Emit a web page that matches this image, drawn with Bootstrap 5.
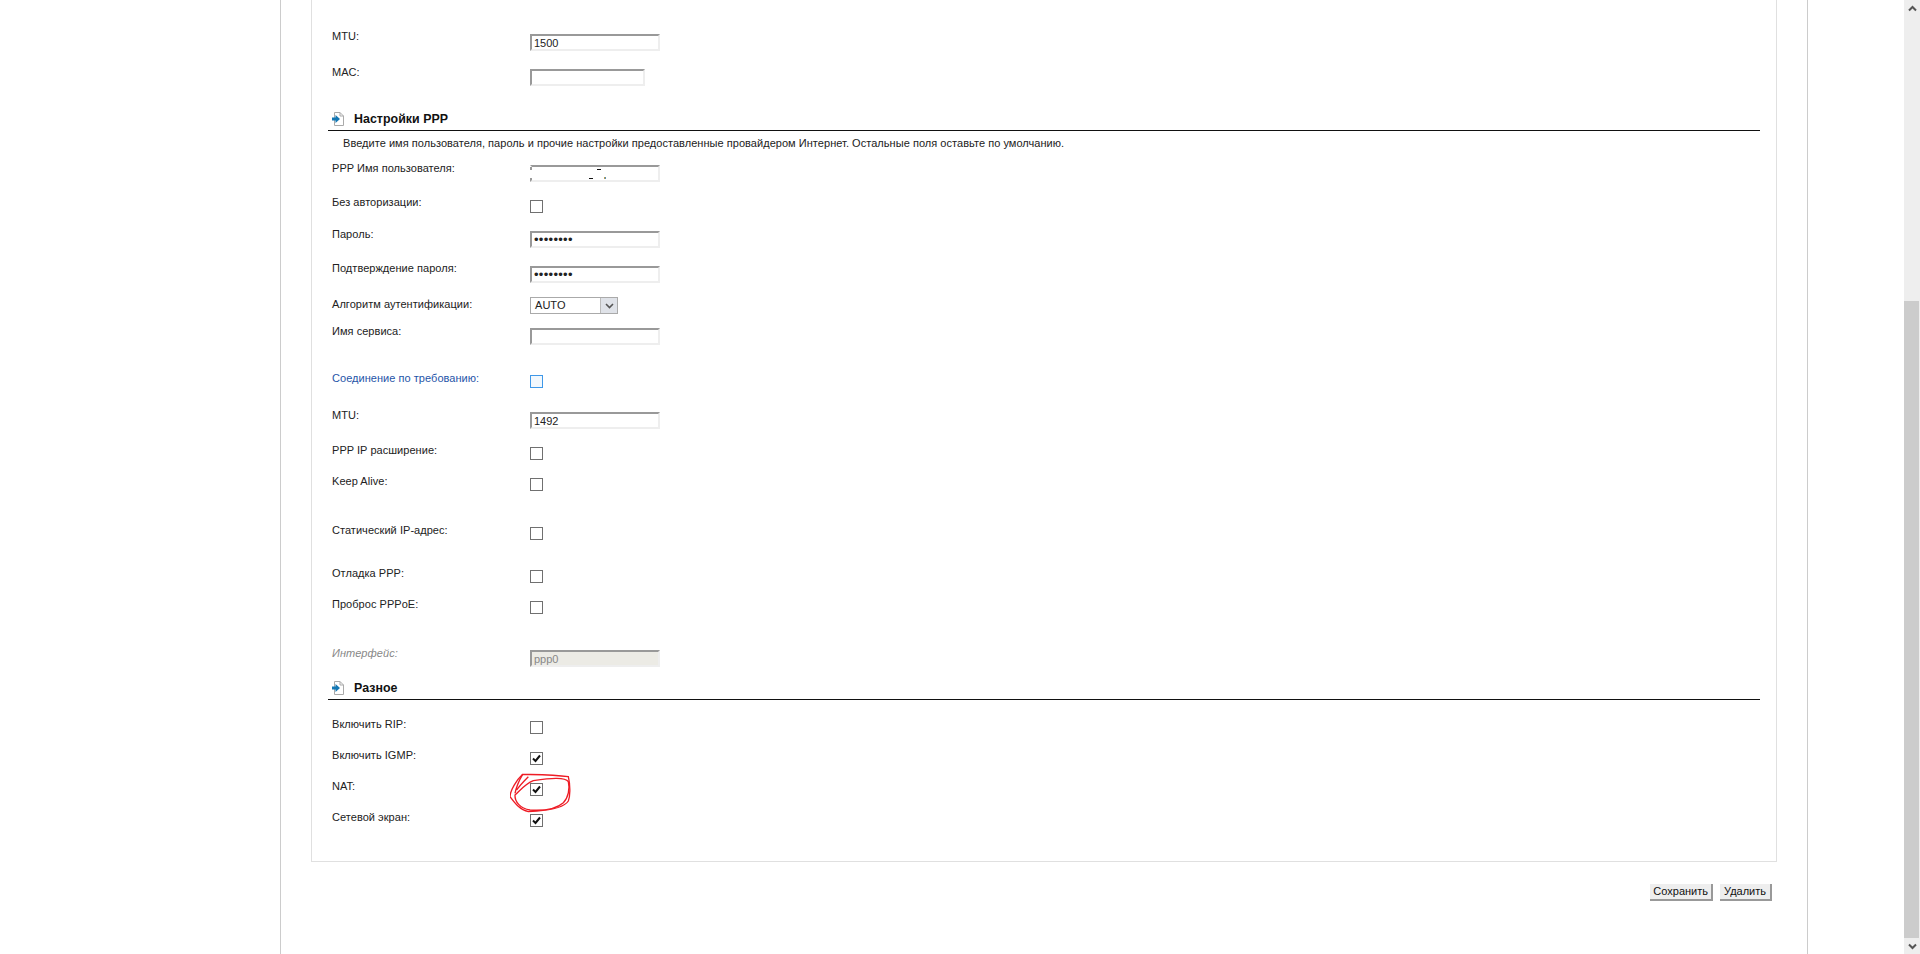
<!DOCTYPE html>
<html lang="ru">
<head>
<meta charset="utf-8">
<title>Настройки PPP</title>
<link rel="stylesheet" href="https://cdn.jsdelivr.net/npm/bootstrap@5.3.0/dist/css/bootstrap.min.css">
<style>
html,body{height:954px;overflow:hidden;background:#fff}
body{font-family:"Liberation Sans",Arial,sans-serif;font-size:11px;line-height:13px;color:#222;letter-spacing:.04px}
.shell{height:954px}
.gutter-l{width:280px}
.sheet{width:1528px;border-left:1px solid #ccc;border-right:1px solid #ccc;padding-left:30px}
.gutter-r{width:96px}
.sbar{width:16px;background:#eee}
.sbtn{height:16px}
.sthumb{width:15px;height:637px;background:#ccc;margin-top:285px}
.sheet-panel{height:862px;width:1466px;border:solid #e0e0e0;border-width:0 1px 1px 1px;padding:34px 0 0 16px;position:relative}
.frow{display:flex;align-items:flex-start;padding-left:4px}
.flabel{width:198px;flex:none;margin-top:-3px}
.up2{margin-top:-4px}.dn1{margin-top:1px}
.fld{display:block;width:130px;height:17px;border:2px solid;border-color:#999 #eee #eee #999;background:#fff;padding:0 2px;font:11px/13px "Liberation Sans",Arial,sans-serif;color:#222;border-radius:0;outline:0}
.fld-s{width:115px}
.fld-pass{font-size:13px;letter-spacing:.3px}
.fld-off{background:#ecebe5;color:#888;border-right-color:#eee}
.fld-wiped{border-left-color:transparent;background:
  linear-gradient(#999,#999) 0 0/2px 5px no-repeat border-box,
  linear-gradient(#999,#999) 0 13px/2px 4px no-repeat border-box,
  linear-gradient(#111,#111) 67px 4px/4px 1px no-repeat border-box,
  linear-gradient(#111,#111) 59px 13px/4px 1px no-repeat border-box,
  linear-gradient(90deg,#e8a020,#2a8ae0) 74px 12px/2px 2px no-repeat border-box,
  #fff}
.pick{width:88px;height:17px;border:1px solid #aaa;background:#fff;padding-left:4px;line-height:15px;color:#222}
.pick-arrow{margin-left:auto;width:17px;background:#dfe2e8;border-left:1px solid #bbb}
.tick{display:flex;align-items:center;justify-content:center;width:13px;height:13px;border:1px solid #707070;background:#fff}
.tick-focus{border-color:#3f98e8;background:#f2f8fd}
.sect{height:23px;border-bottom:1px solid #111;font-size:12.4px;font-weight:700;color:#111;padding-left:4px;width:1432px}
.sect svg{margin-right:10px}
.intro{padding-left:15px;margin-top:6px}
.blue{color:#1f55a8}
.ital{font-style:italic;color:#888}
.g10{margin-top:10px}.g14{margin-top:14px}.g15{margin-top:15px}.g18{margin-top:18px}.g21{margin-top:21px}.g22{margin-top:22px}.g24{margin-top:24px}.g30{margin-top:30px}.g36{margin-top:36px}
.acts{padding:22px 5px 0 0;width:1466px;gap:7px}
.wbtn{height:17px;padding:0 3px;border:0;border-right:2px solid #999;border-bottom:2px solid #999;background:#eee;font:11px/15px "Liberation Sans",Arial,sans-serif;color:#111}
.wbtn-wide{padding:0 4px}
.scribble{position:absolute;left:198px;top:770px;pointer-events:none}
</style>
</head>
<body>
<div class="shell d-flex">
  <div class="gutter-l"></div>
  <div class="sheet">
    <div class="sheet-panel">
      <div class="frow"><span class="flabel up2">MTU:</span><input class="fld" value="1500"></div>
      <div class="frow g18"><span class="flabel">MAC:</span><input class="fld fld-s" value=""></div>
      <div class="sect g22 d-flex align-items-center">
        <svg width="12" height="14" viewBox="0 0 12 14"><path d="M2.500.5h5.500l3.500 3.500v9.500H2.500z" fill="#fff" stroke="#aaa"/><path d="M8 .5V4h3.500" fill="none" stroke="#aaa"/><path d="M0 5.500h3.500V3L8 7l-4.500 4V8.500H0z" fill="#1478b4"/></svg>
        <span>Настройки PPP</span>
      </div>
      <div class="intro">Введите имя пользователя, пароль и прочие настройки предоставленные провайдером Интернет. Остальные поля оставьте по умолчанию.</div>
      <div class="frow g15"><span class="flabel">PPP Имя пользователя:</span><input class="fld fld-wiped" value=""></div>
      <div class="frow g18"><span class="flabel up2">Без авторизации:</span><span class="tick"></span></div>
      <div class="frow g18"><span class="flabel">Пароль:</span><input type="password" class="fld fld-pass" value="abcdefgh"></div>
      <div class="frow g18"><span class="flabel up2">Подтверждение пароля:</span><input type="password" class="fld fld-pass" value="abcdefgh"></div>
      <div class="frow g14"><span class="flabel dn1">Алгоритм аутентификации:</span><div class="pick d-flex">AUTO<span class="pick-arrow d-flex align-items-center justify-content-center"><svg width="9" height="6" viewBox="0 0 9 6"><path d="M1 1l3.500 3.500L8 1" fill="none" stroke="#555" stroke-width="1.600"/></svg></span></div></div>
      <div class="frow g14"><span class="flabel">Имя сервиса:</span><input class="fld" value=""></div>
      <div class="frow g30"><span class="flabel blue">Соединение по требованию:</span><span class="tick tick-focus"></span></div>
      <div class="frow g24"><span class="flabel">MTU:</span><input class="fld" value="1492"></div>
      <div class="frow g18"><span class="flabel">PPP IP расширение:</span><span class="tick"></span></div>
      <div class="frow g18"><span class="flabel">Keep Alive:</span><span class="tick"></span></div>
      <div class="frow g36"><span class="flabel">Статический IP-адрес:</span><span class="tick"></span></div>
      <div class="frow g30"><span class="flabel">Отладка PPP:</span><span class="tick"></span></div>
      <div class="frow g18"><span class="flabel">Проброс PPPoE:</span><span class="tick"></span></div>
      <div class="frow g36"><span class="flabel ital">Интерфейс:</span><input class="fld fld-off" value="ppp0" disabled></div>
      <div class="sect g10 d-flex align-items-center">
        <svg width="12" height="14" viewBox="0 0 12 14"><path d="M2.500.5h5.500l3.500 3.500v9.500H2.500z" fill="#fff" stroke="#aaa"/><path d="M8 .5V4h3.500" fill="none" stroke="#aaa"/><path d="M0 5.500h3.500V3L8 7l-4.500 4V8.500H0z" fill="#1478b4"/></svg>
        <span>Разное</span>
      </div>
      <div class="frow g21"><span class="flabel">Включить RIP:</span><span class="tick"></span></div>
      <div class="frow g18"><span class="flabel">Включить IGMP:</span><span class="tick"><svg width="11" height="11" viewBox="0 0 11 11"><path d="M2 5.500l2.500 2.500L9 2.500" fill="none" stroke="#111" stroke-width="2"/></svg></span></div>
      <div class="frow g18"><span class="flabel">NAT:</span><span class="tick"><svg width="11" height="11" viewBox="0 0 11 11"><path d="M2 5.500l2.500 2.500L9 2.500" fill="none" stroke="#111" stroke-width="2"/></svg></span></div>
      <div class="frow g18"><span class="flabel">Сетевой экран:</span><span class="tick"><svg width="11" height="11" viewBox="0 0 11 11"><path d="M2 5.500l2.500 2.500L9 2.500" fill="none" stroke="#111" stroke-width="2"/></svg></span></div>
      <svg class="scribble" width="66" height="46" viewBox="30 30 198 138" fill="none" stroke="#ee1c25" stroke-width="4">
        <path d="M45 105C44 125 60 145 90 150C120 152 165 150 190 128C205 113 210 85 205 65C195 50 150 55 100 62C75 72 60 92 45 105Z"/>
        <path d="M30 110C31 90 50 60 68 43C100 44 160 44 205 50C212 80 210 110 205 123C190 146 140 151 110 153L85 155C60 150 45 130 30 110Z"/>
        <path d="M68 43C58 60 50 75 45 100M50 90C60 75 75 60 85 50"/>
      </svg>
    </div>
    <div class="acts d-flex justify-content-end">
      <button class="wbtn">Сохранить</button>
      <button class="wbtn wbtn-wide">Удалить</button>
    </div>
  </div>
  <div class="gutter-r"></div>
  <div class="sbar d-flex flex-column">
    <div class="sbtn d-flex align-items-center justify-content-center"><svg width="9" height="7" viewBox="0 0 9 7"><path d="M1 5.500l3.500-3.500L8 5.500" fill="none" stroke="#555" stroke-width="2"/></svg></div>
    <div class="sthumb"></div>
    <div class="sbtn d-flex align-items-center justify-content-center"><svg width="9" height="7" viewBox="0 0 9 7"><path d="M1 1.500l3.500 3.500L8 1.500" fill="none" stroke="#555" stroke-width="2"/></svg></div>
  </div>
</div>
</body>
</html>
